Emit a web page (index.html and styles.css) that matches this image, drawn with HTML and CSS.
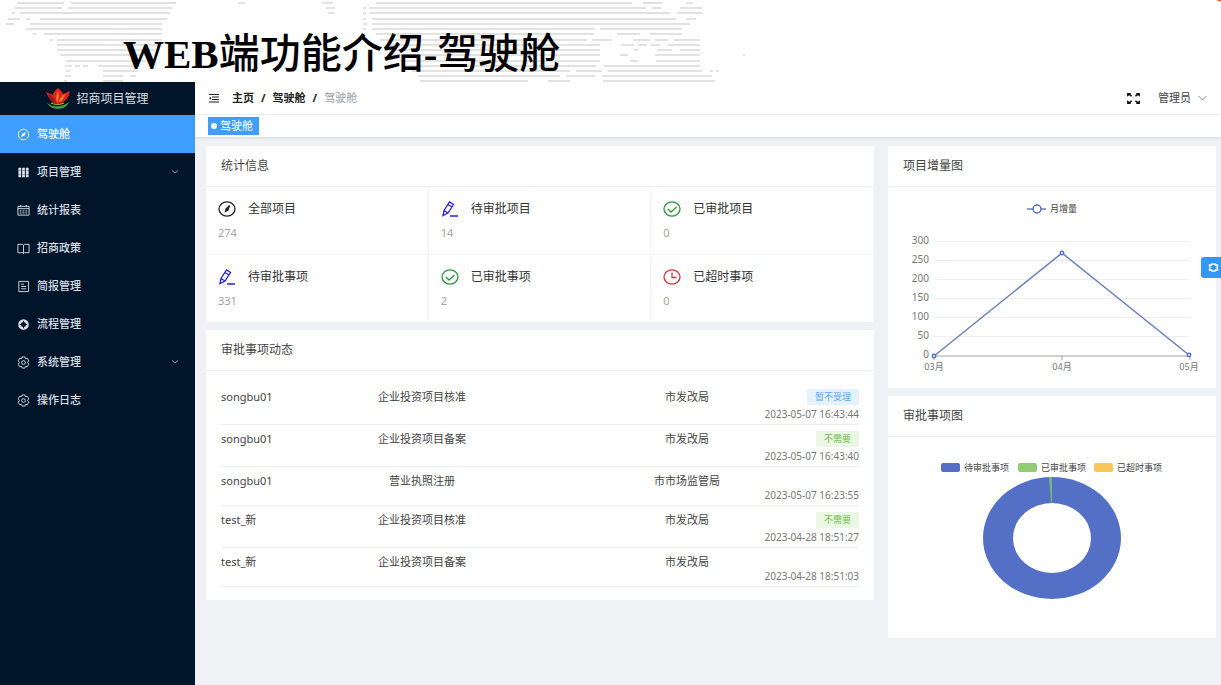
FILE: index.html
```html
<!DOCTYPE html>
<html lang="zh-CN">
<head>
<meta charset="utf-8">
<title>WEB端功能介绍-驾驶舱</title>
<link rel="stylesheet" href="styles.css">
</head>
<body>
<header class="banner">
  <svg class="banner-map" width="760" height="82" viewBox="0 0 760 82" aria-hidden="true">
    <path d="M17 3H64M71 3H176M238 3H245M322 3H333M376 3H632M643 3H662M686 3H693
      M15 8H62M68 8H172M326 8H335M363 8H366M369 8H646M652 8H661M680 8H702
      M12 13H15M20 13H170M328 13H334M363 13H366M370 13H670M677 13H703
      M8 19H20M26 19H30M40 19H167M363 19H366M372 19H676M686 19H696
      M6 24H14M30 24H162M364 24H367M372 24H690
      M26 29H162M363 29H366M372 29H595M600 29H682
      M33 34H36M44 34H162M376 34H594M617 34H640M650 34H682
      M50 40H53M57 40H162M380 40H587M592 40H612M633 40H650M655 40H668M674 40H700
      M57 45H160M385 45H600M621 45H634M638 45H647M651 45H660M668 45H700
      M57 50H155M385 50H600M634 50H638M657 50H672M680 50H700
      M60 55H150M390 55H600M620 55H628M655 55H700M743 55H745
      M66 61H145M400 61H600M630 61H638M656 61H700
      M65 66H72M75 66H80M83 66H88M98 66H140M405 66H596M604 66H700
      M66 71H70M103 71H138M412 71H570M576 71H602M608 71H702M710 71H713M716 71H719
      M65 76H71M103 76H123M130 76H136M418 76H560M566 76H595M602 76H712
      M64 81H67M103 81H123M420 81H528M548 81H570M603 81H715"/>
  </svg>
  <h1 class="banner-title">WEB<span class="banner-cjk">端功能介绍</span>-<span class="banner-cjk">驾驶舱</span></h1>
  <span class="banner-corner"></span>
</header>

<div class="app">
  <aside class="sidebar">
    <div class="logo">
      <svg width="24" height="22" viewBox="0 0 24 22" aria-hidden="true">
        <path fill="#e2231a" d="M12 16C6 15 3 11 0 4l7 3c0-3 3-5 5-7 2 2 4 3 5 6l7-3c-1 6-5 12-12 13z"/>
        <path fill="#f5842a" d="M12 3c1 4 1 8-1 12-1-4-1-8 1-12zM19 6c-1 4-3 7-6 8 1-4 3-6 6-8z"/>
        <path fill="#a31812" d="M2 6c5 2 7 4 8 9-4-1-7-4-8-9z"/>
        <path fill="#3f9c3a" d="M1 15c5 4 14 5 22-1-3 9-18 9-22 1z"/>
        <path fill="none" stroke="#d8b13a" d="M5 15c4 2 9 2 13 0"/>
      </svg>
      <span>招商项目管理</span>
    </div>
    <nav class="menu">
      <a class="menu-item active" href="#"><svg class="mi" viewBox="0 0 14 14"><circle cx="7" cy="7" r="5.6"/><path class="solid" d="M10 4 8 8 4 10 6 6z"/></svg>驾驶舱</a>
      <a class="menu-item" href="#"><svg class="mi" viewBox="0 0 14 14"><path class="solid" d="M1.500 2h3v3h-3zM5.500 2h3v3h-3zM9.500 2h3v3h-3zM1.500 5.500h3v3h-3zM5.500 5.500h3v3h-3zM9.500 5.500h3v3h-3zM1.500 9h3v3h-3zM5.500 9h3v3h-3zM9.500 9h3v3h-3z"/></svg>项目管理<svg class="arrow" viewBox="0 0 8 8"><path d="M1 2.500 4 5 7 2.500"/></svg></a>
      <a class="menu-item" href="#"><svg class="mi" viewBox="0 0 14 14"><path d="M1 2.500h12v9.500H1zM1 5h12M4 1v2.500M10 1v2.500"/><path stroke-dasharray="2 1" d="M3 7.500h8M3 9.700h8"/></svg>统计报表</a>
      <a class="menu-item" href="#"><svg class="mi" viewBox="0 0 14 14"><path d="M1 2.500h5l1 1 1-1h5v9H8l-1 1-1-1H1zM7 3.500v9"/></svg>招商政策</a>
      <a class="menu-item" href="#"><svg class="mi" viewBox="0 0 14 14"><path d="M2 1.500h10.500v11H2zM4.500 4.500h3M4.500 7h5.500M4.500 9.500h5.500"/></svg>简报管理</a>
      <a class="menu-item" href="#"><svg class="mi" viewBox="0 0 14 14"><circle cx="7" cy="7" r="4.200" stroke-width="3"/><path stroke="#001529" d="M7 3v2M7 9v2M3 7h2M9 7h2"/></svg>流程管理</a>
      <a class="menu-item" href="#"><svg class="mi" viewBox="0 0 14 14"><path d="M5.500 1h3l.6 1.800 2-.3 1.600 2.700L11.300 7l1.400 1.800-1.600 2.700-2-.3-.6 1.800h-3l-.6-1.800-2 .3-1.600-2.700L2.700 7 1.300 5.200l1.600-2.700 2 .3z"/><circle cx="7" cy="7" r="2"/></svg>系统管理<svg class="arrow" viewBox="0 0 8 8"><path d="M1 2.500 4 5 7 2.500"/></svg></a>
      <a class="menu-item" href="#"><svg class="mi" viewBox="0 0 14 14"><path d="M5.500 1h3l.6 1.800 2-.3 1.600 2.700L11.300 7l1.400 1.800-1.600 2.700-2-.3-.6 1.800h-3l-.6-1.800-2 .3-1.600-2.700L2.700 7 1.300 5.200l1.600-2.700 2 .3z"/><circle cx="7" cy="7" r="2"/></svg>操作日志</a>
    </nav>
  </aside>

  <div class="main">
    <div class="navbar">
      <button class="icon-btn" aria-label="折叠菜单"><svg width="10" height="10" viewBox="0 0 10 10"><path stroke="#222" stroke-width="1.200" d="M0 1.500h10M3 4h7M3 6.500h7M0 9h10"/><path fill="#222" d="M0 5.200 2 3.700v3z"/></svg></button>
      <nav class="crumbs">
        <a href="#">主页</a><span class="sep">/</span><a href="#">驾驶舱</a><span class="sep">/</span><span class="current">驾驶舱</span>
      </nav>
      <button class="icon-btn expand" aria-label="全屏"><svg width="13" height="11" viewBox="0 0 14 12"><path fill="#111" d="M0 0h4.500L3.500 1.200 5.500 3 4.300 4.200 2.200 2.400 0 4zM14 0H9.500l1 1.200L8.500 3l1.200 1.200 2.100-1.800L14 4zM0 12h4.500l-1-1.200L5.500 9 4.300 7.800 2.200 9.600 0 8zM14 12H9.500l1-1.200L8.500 9l1.200-1.200 2.100 1.800L14 8z"/></svg></button>
      <button class="user">管理员<svg width="9" height="6" viewBox="0 0 9 6"><path fill="none" stroke="#888" d="M.5 1 4.500 5l4-4"/></svg></button>
    </div>
    <div class="tabs"><a class="tab" href="#">驾驶舱</a></div>

    <main class="content">
      <div class="column">
        <section class="card">
          <h2 class="card-title">统计信息</h2>
          <div class="stats">
            <div class="stat"><div class="stat-head"><svg class="si" viewBox="0 0 18 16" stroke="#222"><ellipse cx="9" cy="8" rx="8" ry="7.200"/><path fill="#222" d="M11.500 4.500 10 9 7.500 10.500 8 8z"/></svg>全部项目</div><div class="stat-num">274</div></div>
            <div class="stat"><div class="stat-head"><svg class="si" viewBox="0 0 18 16" stroke="#2a22e0"><path d="M2 14.500 3 9.500 8.500 1l4 2.500L7 12zM3 9.500 7 12M7 3.500l4 2.500M9 15h8"/></svg>待审批项目</div><div class="stat-num">14</div></div>
            <div class="stat"><div class="stat-head"><svg class="si" viewBox="0 0 18 16" stroke="#2f9438"><ellipse cx="9" cy="8" rx="8" ry="7.200"/><path d="m5 8 3 3 5.500-5"/></svg>已审批项目</div><div class="stat-num">0</div></div>
            <div class="stat"><div class="stat-head"><svg class="si" viewBox="0 0 18 16" stroke="#2a22e0"><path d="M2 14.500 3 9.500 8.500 1l4 2.500L7 12zM3 9.500 7 12M7 3.500l4 2.500M9 15h8"/></svg>待审批事项</div><div class="stat-num">331</div></div>
            <div class="stat"><div class="stat-head"><svg class="si" viewBox="0 0 18 16" stroke="#2f9438"><ellipse cx="9" cy="8" rx="8" ry="7.200"/><path d="m5 8 3 3 5.500-5"/></svg>已审批事项</div><div class="stat-num">2</div></div>
            <div class="stat"><div class="stat-head"><svg class="si" viewBox="0 0 18 16" stroke="#e0303a"><ellipse cx="9" cy="8" rx="8" ry="7.200"/><path d="M9 3.500V8.500h4.500"/></svg>已超时事项</div><div class="stat-num">0</div></div>
          </div>
        </section>

        <section class="card">
          <h2 class="card-title">审批事项动态</h2>
          <div class="feed-wrap">
            <table class="feed">
              <colgroup><col class="c-name"><col class="c-item"><col class="c-dept"><col class="c-time"></colgroup>
              <tbody>
                <tr><td>songbu01</td><td class="item">企业投资项目核准</td><td class="dept">市发改局</td><td class="when"><div class="state"><span class="tag blue">暂不受理</span></div><time>2023-05-07 16:43:44</time></td></tr>
                <tr><td>songbu01</td><td class="item">企业投资项目备案</td><td class="dept">市发改局</td><td class="when"><div class="state"><span class="tag green">不需要</span></div><time>2023-05-07 16:43:40</time></td></tr>
                <tr><td>songbu01</td><td class="item">营业执照注册</td><td class="dept">市市场监管局</td><td class="when"><div class="state"></div><time>2023-05-07 16:23:55</time></td></tr>
                <tr><td>test_新</td><td class="item">企业投资项目核准</td><td class="dept">市发改局</td><td class="when"><div class="state"><span class="tag green">不需要</span></div><time>2023-04-28 18:51:27</time></td></tr>
                <tr><td>test_新</td><td class="item">企业投资项目备案</td><td class="dept">市发改局</td><td class="when"><div class="state"></div><time>2023-04-28 18:51:03</time></td></tr>
              </tbody>
            </table>
          </div>
        </section>
      </div>

      <div class="column">
        <section class="card">
          <h2 class="card-title">项目增量图</h2>
          <svg class="chart" viewBox="0 0 328 201" role="img" aria-label="项目增量图">
            <path class="series" d="M139 22h19"/>
            <circle class="dot" cx="149" cy="22" r="4"/>
            <text class="legend-text" x="162" y="25">月增量</text>
            <path class="grid" d="M46 54.500H302M46 73.500H302M46 92.500H302M46 111.500H302M46 130.500H302M46 149.500H302"/>
            <path class="axis" d="M46 169H302M46 169v4M174 169v4M302 169v4"/>
            <g class="y-labels">
              <text x="41" y="57">300</text><text x="41" y="76">250</text><text x="41" y="95">200</text><text x="41" y="114">150</text><text x="41" y="133">100</text><text x="41" y="152">50</text><text x="41" y="171">0</text>
            </g>
            <g class="x-labels">
              <text x="46" y="183">03月</text><text x="174" y="183">04月</text><text x="301" y="183">05月</text>
            </g>
            <path class="series" d="M46 169 174 66 301 168"/>
            <circle class="dot" cx="46" cy="169" r="1.700"/><circle class="dot" cx="174" cy="66" r="1.700"/><circle class="dot" cx="301" cy="168" r="1.700"/>
          </svg>
        </section>

        <section class="card">
          <h2 class="card-title">审批事项图</h2>
          <svg class="chart" viewBox="0 0 328 201" role="img" aria-label="审批事项图">
            <rect x="53" y="26" width="19" height="9" rx="2" fill="#5470c6"/><text class="legend-text" x="76" y="34">待审批事项</text>
            <rect x="130" y="26" width="19" height="9" rx="2" fill="#91cc75"/><text class="legend-text" x="153" y="34">已审批事项</text>
            <rect x="206" y="26" width="19" height="9" rx="2" fill="#fac858"/><text class="legend-text" x="229" y="34">已超时事项</text>
            <path fill="#5470c6" fill-rule="evenodd" d="M95 101a69 61 0 1 0 138 0a69 61 0 1 0-138 0zM125 101a39 35 0 1 1 78 0a39 35 0 1 1-78 0z"/>
            <path fill="#74b878" d="M161 40h3v26h-1z"/>
          </svg>
        </section>
      </div>
    </main>
  </div>
  <button class="settings" aria-label="设置"><svg width="11" height="11" viewBox="0 0 14 14"><path fill="none" stroke="#fff" stroke-width="2" d="M5 2.500h4l1 1.500h2v2l-1 1 1 1v2h-2l-1 1.500H5L4 10H2V8l1-1-1-1V4h2z"/></svg></button>
</div>
</body>
</html>
```
FILE: styles.css
```css
* { box-sizing: border-box; }

body {
  margin: 0;
  min-height: 100vh;
  display: flex;
  flex-direction: column;
  background: #fff;
  color: #444;
  font-family: "Noto Sans", "Noto Sans CJK SC", sans-serif;
  font-size: 11px;
  line-height: 16px;
}

a { color: inherit; text-decoration: none; }

button {
  border: 0;
  padding: 0;
  background: none;
  color: inherit;
  font: inherit;
  cursor: pointer;
}

svg { display: block; }

/* Banner */
.banner {
  position: relative;
  height: 82px;
  padding: 30px 0 0 123px;
  overflow: hidden;
}

.banner-map {
  position: absolute;
  top: 0;
  left: 0;
  fill: none;
  stroke: #e2e2e2;
  stroke-width: 2;
}

.banner-title {
  position: relative;
  margin: 0;
  color: #000;
  font: bold 41px/46px "Liberation Serif", serif;
  white-space: nowrap;
}

.banner-cjk {
  font-family: "Noto Sans CJK SC", sans-serif;
  font-weight: 500;
  line-height: 1;
}

.banner-corner {
  position: absolute;
  top: 0;
  right: 0;
  width: 5px;
  height: 2px;
  background: #e8603c;
  clip-path: polygon(0 0, 100% 0, 100% 100%);
}

/* Shell */
.app {
  position: relative;
  flex: 1;
  display: flex;
}

.sidebar {
  flex: 0 0 195px;
  background: #001529;
  color: #d9dfe5;
}

.logo {
  display: flex;
  align-items: center;
  justify-content: center;
  gap: 6px;
  height: 33px;
  font-size: 12px;
}

.menu-item {
  display: flex;
  align-items: center;
  gap: 7px;
  height: 38px;
  padding: 0 16px 0 17px;
  font-weight: 500;
}

.menu-item.active { background: #409eff; color: #fff; }

.mi {
  width: 13px;
  height: 13px;
  fill: none;
  stroke: currentColor;
}

.mi .solid { fill: currentColor; stroke: none; }

.arrow {
  width: 8px;
  height: 8px;
  margin-left: auto;
  fill: none;
  stroke: #8d99a6;
}

.main {
  flex: 1;
  min-width: 0;
  display: flex;
  flex-direction: column;
  background: #eff1f5;
}

.navbar {
  display: flex;
  align-items: center;
  height: 33px;
  padding: 0 14px;
  background: #fff;
  border-bottom: 1px solid #f1f1f3;
}

.crumbs {
  display: flex;
  gap: 7px;
  margin-left: 13px;
  color: #222;
  font-weight: 700;
}

.crumbs .current { color: #97a0a8; font-weight: 400; }

.expand { margin-left: auto; }

.user {
  display: flex;
  align-items: center;
  gap: 7px;
  margin-left: 18px;
}

.tabs {
  display: flex;
  height: 22px;
  padding: 2px 13px;
  background: #fff;
  box-shadow: 0 1px 3px rgba(0, 0, 0, 0.12);
}

.tab {
  display: flex;
  align-items: center;
  gap: 3px;
  height: 18px;
  padding: 0 6px 0 3px;
  background: #409eff;
  color: #fff;
}

.tab::before {
  content: "";
  width: 6px;
  height: 6px;
  border-radius: 50%;
  background: #fff;
}

.content {
  display: grid;
  grid-template-columns: 668fr 328fr;
  align-items: start;
  gap: 14px;
  padding: 9px 5px 20px 11px;
}

.column {
  display: grid;
  gap: 8px;
  min-width: 0;
}

/* Cards */
.card { background: #fff; }

.card-title {
  margin: 0;
  padding: 12px 15px;
  border-bottom: 1px solid #eef0f3;
  color: #444;
  font-size: 12px;
  font-weight: 400;
  line-height: 16px;
}

.stats {
  display: grid;
  grid-template-columns: repeat(3, 1fr);
}

.stat {
  height: 68px;
  padding: 14px 12px 12px;
  border-right: 1px solid #f4f5f7;
  border-bottom: 1px solid #f4f5f7;
}

.stat:nth-child(n + 4) { height: 67px; border-bottom: 0; }

.stat-head {
  display: flex;
  align-items: center;
  gap: 12px;
  color: #333;
  font-size: 12px;
}

.si {
  width: 18px;
  height: 16px;
  fill: none;
  stroke-width: 1.3;
}

.stat-num { margin-top: 8px; color: #a3a3a3; }

.feed-wrap { padding: 12px 15px 13px; }

.feed {
  width: 100%;
  table-layout: fixed;
  border-collapse: collapse;
}

.c-name, .c-item { width: 21%; }
.c-dept { width: 42%; }
.c-time { width: 16%; }

.feed td {
  padding: 6px 0 3px;
  border-bottom: 1px solid #eceef1;
  vertical-align: top;
  white-space: nowrap;
}

.feed .item { text-align: center; }
.feed .dept { padding-left: 128px; text-align: center; }

.when { color: #777; }

.state {
  display: flex;
  justify-content: flex-end;
  min-height: 13px;
}

.when time {
  display: block;
  margin-top: 2px;
  font-size: 10px;
  line-height: 14px;
  text-align: right;
}

.tag { padding: 0 8px; font-size: 9px; line-height: 16px; }
.tag.blue { background: #e4f1ff; color: #5aa5f5; }
.tag.green { background: #eaf7e4; color: #72c04a; }

/* Charts */
.chart { width: 100%; height: 201px; }
.series { fill: none; stroke: #6b80c4; stroke-width: 1.5; }
.dot { fill: #fff; stroke: #5470c6; stroke-width: 1.5; }
.grid { stroke: #eceef4; }
.axis { stroke: #a0a3aa; }
.legend-text { fill: #444; font-size: 9px; }
.y-labels { fill: #777; font-size: 10px; text-anchor: end; }
.x-labels { fill: #777; font-size: 9px; text-anchor: middle; }

.settings {
  position: absolute;
  top: 175px;
  right: 0;
  display: flex;
  align-items: center;
  justify-content: flex-end;
  width: 20px;
  height: 21px;
  padding-right: 2px;
  border-radius: 3px 0 0 3px;
  background: #3296fa;
}
```
